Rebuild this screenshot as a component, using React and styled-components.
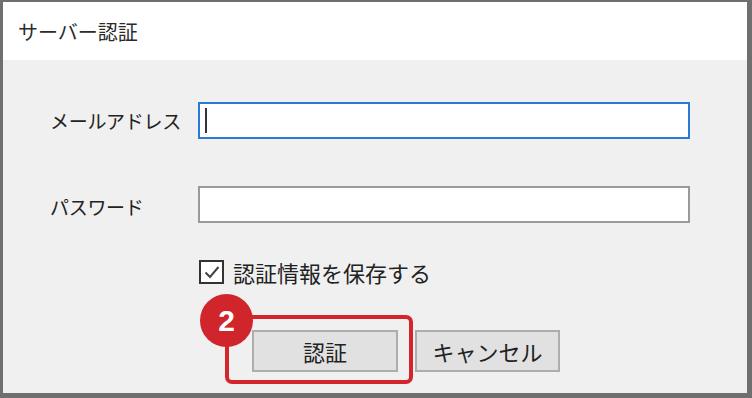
import React from 'react';
import styled, { createGlobalStyle } from 'styled-components';

const GlobalStyle = createGlobalStyle`
  html, body {
    margin: 0;
    padding: 0;
    background: #ffffff;
  }
  body {
    font-family: "Noto Sans CJK JP", "Noto Sans", sans-serif;
    color: #222;
  }
`;

const Window = styled.div`
  width: 752px;
  height: 398px;
  box-sizing: border-box;
  border-style: solid;
  border-color: #6f6f6f;
  border-width: 2px 5px 5px 3px;
  background: #f0f0f0;
  display: flex;
  flex-direction: column;
`;

const TitleBar = styled.div`
  height: 58px;
  background: #ffffff;
  display: flex;
  align-items: center;
  padding-left: 15px;
  font-size: 20px;
  color: #2b2b2b;
`;

const Body = styled.div`
  padding: 42px 0 0 47px;
  display: grid;
  grid-template-columns: 148px 492px;
  row-gap: 47px;
  align-items: center;
`;

const Label = styled.div`
  font-size: 19px;
  letter-spacing: -0.3px;
  color: #222;
  white-space: nowrap;
  margin-top: ${p => p.$offset || 0}px;
`;

const Field = styled.div`
  height: 37px;
  box-sizing: border-box;
  background: #ffffff;
  border: 2px solid ${p => (p.$focused ? '#2a7ad5' : '#9a9a9a')};
  display: flex;
  align-items: center;
  padding-left: 5px;
`;

const Caret = styled.span`
  width: 2px;
  height: 25px;
  background: #333;
`;

const Options = styled.div`
  grid-column: 2;
  margin-top: -14px;
  display: flex;
  flex-direction: column;
  gap: 42px;
`;

const CheckRow = styled.label`
  display: flex;
  align-items: center;
  gap: 9px;
  height: 32px;
  font-size: 22px;
  color: #222;
  margin-left: 1px;
`;

const CheckBox = styled.span`
  width: 25px;
  height: 24px;
  box-sizing: border-box;
  border: 2px solid #333;
  background: #fff;
  display: flex;
  align-items: center;
  justify-content: center;
`;

const ButtonRow = styled.div`
  position: relative;
  display: flex;
  gap: 17px;
  padding-left: 54px;
`;

const Button = styled.div`
  width: ${p => p.$width}px;
  height: 42px;
  box-sizing: border-box;
  background: #e1e1e1;
  border: 2px solid #adadad;
  display: flex;
  align-items: center;
  justify-content: center;
  font-size: 22px;
  color: #222;
`;

const Highlight = styled.div`
  position: absolute;
  left: 27px;
  top: -15px;
  width: 188px;
  height: 69px;
  box-sizing: border-box;
  border: 4px solid #d5252c;
  border-radius: 7px;
  pointer-events: none;
`;

const Badge = styled.div`
  position: absolute;
  left: 2px;
  top: -36px;
  width: 53px;
  height: 53px;
  border-radius: 50%;
  background: #cf252b;
  color: #fff;
  font-family: "Liberation Sans", Arial, sans-serif;
  font-weight: bold;
  font-size: 30px;
  display: flex;
  align-items: center;
  justify-content: center;
`;

const App = () => {
  return (
    <>
      <GlobalStyle />
      <Window>
        <TitleBar>サーバー認証</TitleBar>
        <Body>
          <Label>メールアドレス</Label>
          <Field $focused>
            <Caret />
          </Field>
          <Label $offset={4}>パスワード</Label>
          <Field />
          <Options>
            <CheckRow>
              <CheckBox>
                <svg width="18" height="18" viewBox="0 0 18 18">
                  <path d="M2.5 9.5 L7 14 L15.5 4" fill="none" stroke="#444" strokeWidth="2" />
                </svg>
              </CheckBox>
              認証情報を保存する
            </CheckRow>
            <ButtonRow>
              <Highlight />
              <Badge>2</Badge>
              <Button $width={146}>認証</Button>
              <Button $width={145}>キャンセル</Button>
            </ButtonRow>
          </Options>
        </Body>
      </Window>
    </>
  );
};

export default App;
